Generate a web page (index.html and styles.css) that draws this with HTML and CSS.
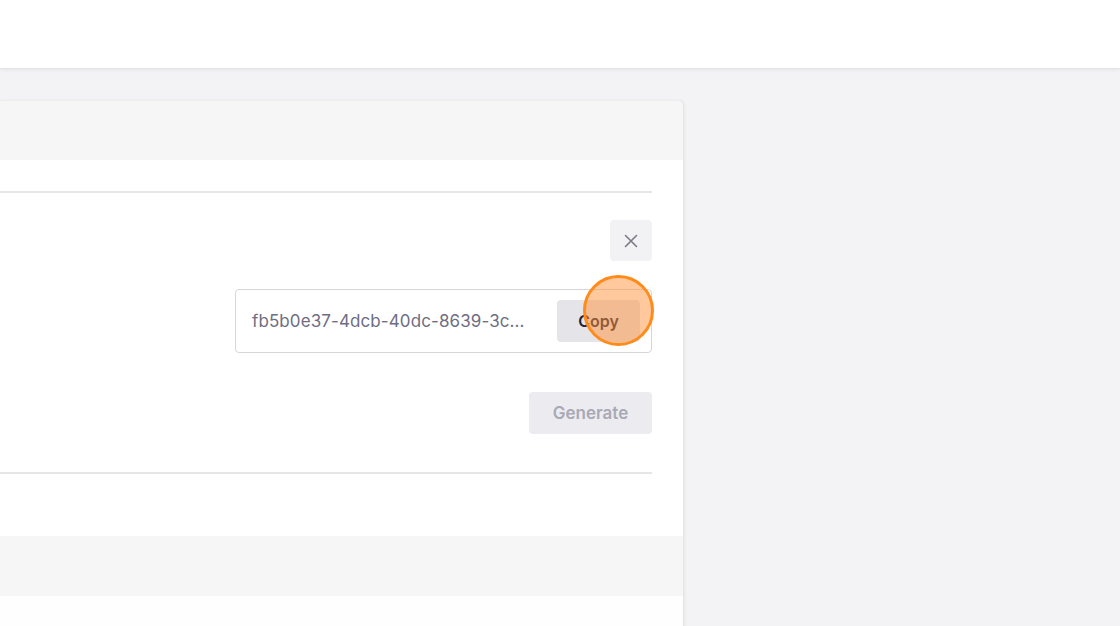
FILE: index.html
```html
<!DOCTYPE html>
<html>
<head>
<meta charset="utf-8">
<link rel="stylesheet" href="styles.css">
</head>
<body>
<header class="topbar"></header>
<main class="main">
  <section class="card">
    <div class="card-head"></div>
    <div class="card-body">
      <div class="rule"></div>
      <div class="row row-close">
        <button class="close-btn" aria-label="Close">
          <svg width="16" height="16" viewBox="0 0 16 16"><path d="M2.5 2.5 L13.5 13.5 M13.5 2.5 L2.5 13.5" stroke="#7a7a85" stroke-width="1.6" stroke-linecap="round" fill="none"/></svg>
        </button>
      </div>
      <div class="row row-key">
        <div class="key-field">
          <span class="key-text">fb5b0e37-4dcb-40dc-8639-3c...</span>
          <button class="copy-btn">Copy</button>
          <span class="cursor-dot"></span>
        </div>
      </div>
      <div class="row row-gen">
        <button class="gen-btn" disabled>Generate</button>
      </div>
      <div class="rule rule-bottom"></div>
    </div>
    <div class="card-foot"></div>
    <div class="card-tail"></div>
  </section>
</main>
</body>
</html>
```
FILE: styles.css
```css
html, body {
  margin: 0;
  padding: 0;
  height: 100%;
  overflow: hidden;
}
body {
  background: #f3f3f5;
  font-family: Inter, "Open Sans", "Liberation Sans", sans-serif;
}
.topbar {
  height: 68px;
  background: #ffffff;
  box-shadow: 0 1px 0 #e2e2e5, 0 2px 4px rgba(0,0,0,0.06);
  position: relative;
  z-index: 2;
}
.main {
  padding-top: 32px;
}
.card {
  width: 683px;
  background: #ffffff;
  border-radius: 0 6px 0 0;
  box-shadow: 1px 0 0 #e6e6e9, 2px 0 3px rgba(0,0,0,0.05);
  display: flex;
  flex-direction: column;
}
.card-head {
  height: 60px;
  background: #f6f6f6;
  border-radius: 0 6px 0 0;
  border-top: 1px solid #ededee;
  box-sizing: border-box;
}
.card-body {
  padding: 31px 31px 0 0;
  display: flex;
  flex-direction: column;
}
.rule {
  height: 2px;
  background: #e6e6e9;
}
.row {
  display: flex;
  justify-content: flex-end;
}
.row-close {
  padding-top: 27px;
}
.close-btn {
  width: 42px;
  height: 41px;
  border: none;
  border-radius: 4px;
  background: #f2f2f4;
  display: flex;
  align-items: center;
  justify-content: center;
  padding: 0;
}
.row-key {
  padding-top: 28px;
}
.key-field {
  position: relative;
  width: 417px;
  height: 64px;
  box-sizing: border-box;
  border: 1px solid #d6d6db;
  border-radius: 4px;
  display: flex;
  align-items: center;
  justify-content: space-between;
  padding: 0 11px 0 16px;
  background: #fff;
}
.key-text {
  font-size: 17px;
  color: #6e6e82;
  letter-spacing: 0.1px;
}
.copy-btn {
  width: 83px;
  height: 42px;
  border: none;
  border-radius: 4px;
  background: #e4e4e9;
  font-family: inherit;
  font-size: 16px;
  font-weight: 600;
  color: #1e2236;
  padding: 0;
}
.cursor-dot {
  position: absolute;
  left: 347px;
  top: -15px;
  width: 71px;
  height: 71px;
  box-sizing: border-box;
  border-radius: 50%;
  border: 3px solid #ff8c1a;
  background: rgba(255, 145, 60, 0.5);
}
.row-gen {
  padding-top: 39px;
}
.gen-btn {
  width: 123px;
  height: 42px;
  border: none;
  border-radius: 4px;
  background: #ececf0;
  font-family: inherit;
  font-size: 17px;
  font-weight: 600;
  color: #a9a9b6;
  padding: 0;
}
.rule-bottom {
  margin-top: 38px;
}
.card-foot {
  margin-top: 62px;
  height: 60px;
  background: #f6f6f6;
}
.card-tail {
  height: 60px;
  background: #fefefe;
}
```
